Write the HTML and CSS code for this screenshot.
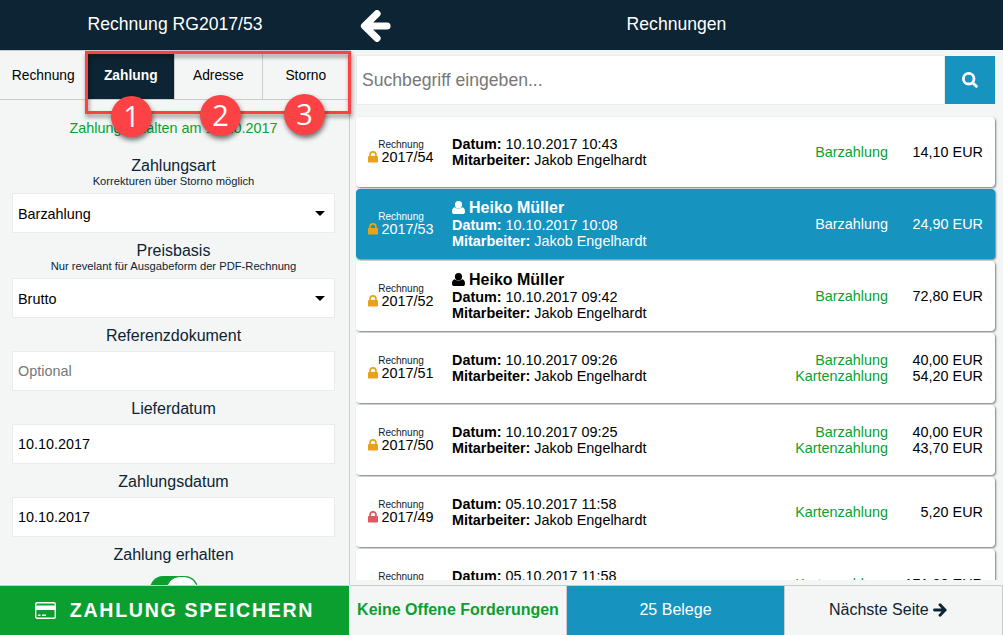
FILE: index.html
```
<!DOCTYPE html>
<html lang="de">
<head>
  <meta charset="UTF-8">
  <meta name="viewport" content="width=device-width, initial-scale=1.0">
  <title>Rechnungen</title>
  <link rel="stylesheet" href="styles.css">
</head>
<body>
  <!-- Icons -->
  <svg class="sprite" width="0" height="0">
    <symbol id="lock" viewBox="0 0 10 12">
      <path d="M1.200 5V3.800a3.800 3.800 0 0 1 7.600 0V5h.5q.7 0 .7.7v5.100q0 .7-.7.7H.7q-.7 0-.7-.7V5.700q0-.7.7-.7zM2.900 5h4.200V3.900a2.100 2.100 0 0 0-4.200 0z"/>
    </symbol>
    <symbol id="user" viewBox="0 0 13 13">
      <path d="M2.800 6.300C4 7.400 5.200 7.700 6.500 7.700s2.500-.3 3.700-1.400c2 .2 2.800 2 2.800 4.400 0 1.400-.9 2.300-2.300 2.300H2.300C.9 13 0 12.100 0 10.700 0 8.300.8 6.500 2.800 6.300z"/>
      <ellipse cx="6.500" cy="3.700" rx="3.600" ry="3.700"/>
    </symbol>
  </svg>

  <div class="app">
    <div class="sidebar">
      <div class="header">Rechnung RG2017/53</div>
      <div class="tabs">
        <div class="tab">Rechnung</div>
        <div class="tab active">Zahlung</div>
        <div class="tab">Adresse</div>
        <div class="tab">Storno</div>
      </div>
      <div class="form">
        <div class="notice">Zahlung erhalten am 10.10.2017</div>
        <div class="label">Zahlungsart</div>
        <div class="hint">Korrekturen über Storno möglich</div>
        <div class="field select">Barzahlung</div>
        <div class="label">Preisbasis</div>
        <div class="hint">Nur revelant für Ausgabeform der PDF-Rechnung</div>
        <div class="field select">Brutto</div>
        <div class="label">Referenzdokument</div>
        <div class="field placeholder">Optional</div>
        <div class="label">Lieferdatum</div>
        <div class="field">10.10.2017</div>
        <div class="label">Zahlungsdatum</div>
        <div class="field">10.10.2017</div>
        <div class="label">Zahlung erhalten</div>
        <div class="toggle"></div>
      </div>
      <div class="save">
        <svg width="21" height="17" viewBox="0 0 21 17">
          <rect x=".7" y=".7" width="19.600" height="15.600" rx="1.500" fill="none" stroke="#fff" stroke-width="1.400"/>
          <path d="M1 3.500h19V8H1zM3 12.500h2.500V14H3zM7 12.500h4V14H7z" fill="#fff"/>
        </svg>
        <span>ZAHLUNG SPEICHERN</span>
      </div>
    </div>

    <div class="main">
      <div class="header">
        <svg class="back" width="31" height="32" viewBox="0 0 31 32">
          <path d="M17 3.700L4.500 16 17 28.300M5 16h22" fill="none" stroke="#fff" stroke-width="7.200" stroke-linecap="round" stroke-linejoin="round"/>
        </svg>
        Rechnungen
      </div>
      <div class="search">
        <div class="search-input">Suchbegriff eingeben...</div>
        <div class="search-btn">
          <svg width="16" height="16" viewBox="0 0 16 16" fill="none" stroke="#fff">
            <circle cx="6.700" cy="6.700" r="5.300" stroke-width="2.800"/>
            <path d="M10.700 10.700l3.600 3.600" stroke-width="3" stroke-linecap="round"/>
          </svg>
        </div>
      </div>

      <div class="list">
        <div class="card">
          <div class="number"><small>Rechnung</small><svg class="lock"><use href="#lock"/></svg>2017/54</div>
          <div class="info">
            <div><b>Datum:</b> 10.10.2017 10:43</div>
            <div><b>Mitarbeiter:</b> Jakob Engelhardt</div>
          </div>
          <div class="method">Barzahlung</div>
          <div class="amount">14,10 EUR</div>
        </div>
        <div class="card selected">
          <div class="number"><small>Rechnung</small><svg class="lock"><use href="#lock"/></svg>2017/53</div>
          <div class="info">
            <div class="customer"><svg class="user"><use href="#user"/></svg>Heiko Müller</div>
            <div><b>Datum:</b> 10.10.2017 10:08</div>
            <div><b>Mitarbeiter:</b> Jakob Engelhardt</div>
          </div>
          <div class="method">Barzahlung</div>
          <div class="amount">24,90 EUR</div>
        </div>
        <div class="card">
          <div class="number"><small>Rechnung</small><svg class="lock"><use href="#lock"/></svg>2017/52</div>
          <div class="info">
            <div class="customer"><svg class="user"><use href="#user"/></svg>Heiko Müller</div>
            <div><b>Datum:</b> 10.10.2017 09:42</div>
            <div><b>Mitarbeiter:</b> Jakob Engelhardt</div>
          </div>
          <div class="method">Barzahlung</div>
          <div class="amount">72,80 EUR</div>
        </div>
        <div class="card">
          <div class="number"><small>Rechnung</small><svg class="lock"><use href="#lock"/></svg>2017/51</div>
          <div class="info">
            <div><b>Datum:</b> 10.10.2017 09:26</div>
            <div><b>Mitarbeiter:</b> Jakob Engelhardt</div>
          </div>
          <div class="method">Barzahlung<br>Kartenzahlung</div>
          <div class="amount">40,00 EUR<br>54,20 EUR</div>
        </div>
        <div class="card">
          <div class="number"><small>Rechnung</small><svg class="lock"><use href="#lock"/></svg>2017/50</div>
          <div class="info">
            <div><b>Datum:</b> 10.10.2017 09:25</div>
            <div><b>Mitarbeiter:</b> Jakob Engelhardt</div>
          </div>
          <div class="method">Barzahlung<br>Kartenzahlung</div>
          <div class="amount">40,00 EUR<br>43,70 EUR</div>
        </div>
        <div class="card">
          <div class="number"><small>Rechnung</small><svg class="lock red"><use href="#lock"/></svg>2017/49</div>
          <div class="info">
            <div><b>Datum:</b> 05.10.2017 11:58</div>
            <div><b>Mitarbeiter:</b> Jakob Engelhardt</div>
          </div>
          <div class="method">Kartenzahlung</div>
          <div class="amount">5,20 EUR</div>
        </div>
        <div class="card">
          <div class="number"><small>Rechnung</small><svg class="lock red"><use href="#lock"/></svg>2017/48</div>
          <div class="info">
            <div><b>Datum:</b> 05.10.2017 11:58</div>
            <div><b>Mitarbeiter:</b> Jakob Engelhardt</div>
          </div>
          <div class="method">Kartenzahlung</div>
          <div class="amount">171,30 EUR</div>
        </div>
      </div>

      <div class="footer">
        <div class="open-claims">Keine Offene Forderungen</div>
        <div class="count">25 Belege</div>
        <div class="next">Nächste Seite
          <svg width="14" height="14" viewBox="0 0 14 14">
            <path d="M7 1.800L12 7l-5 5.200M1.500 7H11" fill="none" stroke="#0c2433" stroke-width="2.900" stroke-linecap="round"/>
          </svg>
        </div>
      </div>
    </div>
  </div>

  <!-- Markierungen -->
  <div class="marker-frame"></div>
  <div class="marker marker-1">1</div>
  <div class="marker marker-2">2</div>
  <div class="marker marker-3">3</div>
</body>
</html>
```
FILE: styles.css
```
* {
  box-sizing: border-box;
}
body {
  margin: 0;
  font-family: "Liberation Sans", Arial, sans-serif;
  font-size: 16px;
  color: #0c2433;
  background-color: #f4f6f6;
  overflow: hidden;
}
.sprite {
  position: absolute;
}
.app {
  display: flex;
  height: 635px;
}
.sidebar {
  width: 350px;
  display: flex;
  flex-direction: column;
}
.main {
  flex: 1;
  display: flex;
  flex-direction: column;
  min-width: 0;
}
.header {
  position: relative;
  height: 50px;
  flex: none;
  line-height: 48px;
  background-color: #0c2433;
  color: #fff;
  font-size: 17.6px;
  text-align: center;
}
.back {
  position: absolute;
  left: 10px;
  top: 10px;
}

/* Tabs */
.tabs {
  display: flex;
  flex: none;
  height: 50px;
  border-top: 1px solid #ccc;
  border-bottom: 1px solid #ccc;
  border-right: 1px solid #ccc;
}
.tab {
  flex: 1;
  line-height: 49px;
  font-size: 13.8px;
  text-align: center;
  color: #000;
  border-right: 1px solid #ccc;
}
.tab:last-child {
  border-right: none;
}
.tab.active {
  background-color: #0c2433;
  color: #fff;
  font-weight: bold;
}

/* Formular */
.form {
  flex: 1;
  min-height: 0;
  overflow: hidden;
  padding: 20px 14px 0 12px;
  border-right: 1px solid #ccc;
  text-align: center;
}
.notice {
  height: 28px;
  line-height: 17px;
  font-size: 14.4px;
  color: #0b9f30;
}
.label {
  margin-top: 9px;
  line-height: 18px;
}
.hint {
  font-size: 11.2px;
  line-height: 12px;
}
.field {
  height: 40px;
  margin-top: 6px;
  padding: 0 5px;
  line-height: 39px;
  font-size: 14.4px;
  text-align: left;
  color: #000;
  background-color: #fff;
  border: 1px solid #ebebeb;
}
.field.placeholder {
  color: #777;
}
.select {
  display: flex;
  align-items: center;
  justify-content: space-between;
  padding-right: 9px;
  line-height: 38px;
  padding-top: 1px;
}
.select::after {
  content: "";
  border: 5px solid transparent;
  border-top-color: #000;
  border-bottom: none;
}
.toggle {
  width: 48px;
  height: 26px;
  margin: 12px auto 0;
  border-radius: 13px;
  background-color: #0b9f30;
}
.toggle::after {
  content: "";
  display: block;
  width: 30px;
  height: 26px;
  margin-left: auto;
  border-radius: 14px;
  background-color: #fff;
  border: 1px solid #0b9f30;
}
.save {
  display: flex;
  flex: none;
  align-items: center;
  justify-content: center;
  gap: 14px;
  width: 349px;
  height: 50px;
  padding-bottom: 1px;
  border-top: 1px solid #ccc;
  background-color: #0b9f30;
  color: #fff;
  font-size: 19.6px;
  font-weight: bold;
  letter-spacing: 1.7px;
}

/* Suche */
.search {
  display: flex;
  flex: none;
  padding: 5px 8px 0 6px;
}
.search-input {
  flex: 1;
  height: 50px;
  padding-left: 5px;
  line-height: 48px;
  font-size: 17.6px;
  color: #777;
  background-color: #fff;
  border: 1px solid #ebebeb;
}
.search-btn {
  display: flex;
  align-items: center;
  justify-content: center;
  width: 50px;
  height: 48px;
  margin-top: 1px;
  background-color: #1693bf;
}

/* Liste */
.list {
  flex: 1;
  min-height: 0;
  overflow: hidden;
  margin: 11px 0 5px;
  padding: 1px 8px 0 6px;
}
.card {
  display: flex;
  align-items: center;
  height: 70px;
  margin-bottom: 2px;
  padding: 0 12px 0 6px;
  font-size: 14.4px;
  line-height: 16px;
  color: #000;
  background-color: #fff;
  border-radius: 4px;
  box-shadow: 1px 1px 2px rgba(0, 0, 0, 0.5);
}
.number {
  width: 78px;
  padding-bottom: 1px;
  text-align: center;
}
.number small {
  display: block;
  margin-bottom: -2px;
  font-size: 10px;
  line-height: 12px;
  color: #0c2433;
}
.lock {
  width: 10px;
  height: 12px;
  margin-right: 3px;
  vertical-align: -1px;
  fill: #e9a31b;
}
.lock.red {
  fill: #dc5b60;
}
.info {
  flex: 1;
  padding-left: 12px;
}
.customer {
  margin-top: -2px;
  font-size: 16px;
  line-height: 19px;
  font-weight: bold;
}
.user {
  width: 13px;
  height: 13px;
  margin-right: 4px;
  vertical-align: -1px;
  fill: currentColor;
}
.method {
  text-align: right;
  color: #0b9f30;
}
.amount {
  width: 95px;
  text-align: right;
}
.card.selected,
.selected .method,
.selected small {
  color: #fff;
}
.card.selected {
  background-color: #1693bf;
}

.footer {
  display: flex;
  flex: none;
  height: 50px;
  border-top: 1px solid #ccc;
  line-height: 47px;
  text-align: center;
}
.footer div {
  flex: 1;
  white-space: nowrap;
  border-right: 1px solid #ccc;
}
.footer .open-claims {
  flex: 0 0 217px;
  font-weight: bold;
  color: #0b9f30;
}
.footer .count {
  flex: 0 0 218px;
  color: #fff;
  background-color: #1693bf;
}
.footer .next {
  padding-right: 11px;
}
.next svg {
  vertical-align: -2px;
}

/* Markierungen */
.marker-frame {
  position: absolute;
  left: 85px;
  top: 51px;
  width: 266px;
  height: 63px;
  border: 3px solid #fd4245;
  filter: drop-shadow(1px 3px 2px rgba(0, 0, 0, 0.45));
}
.marker {
  position: absolute;
  width: 41px;
  height: 41px;
  border-radius: 50%;
  background-color: #fd4245;
  color: #fff;
  font-family: "Open Sans", sans-serif;
  font-size: 29px;
  font-weight: 500;
  line-height: 39px;
  text-align: center;
  box-shadow: 1px 3px 5px rgba(0, 0, 0, 0.55);
}
.marker-1 {
  left: 111px;
  top: 96px;
}
.marker-2 {
  left: 200px;
  top: 95px;
}
.marker-3 {
  left: 284px;
  top: 94px;
}
```
